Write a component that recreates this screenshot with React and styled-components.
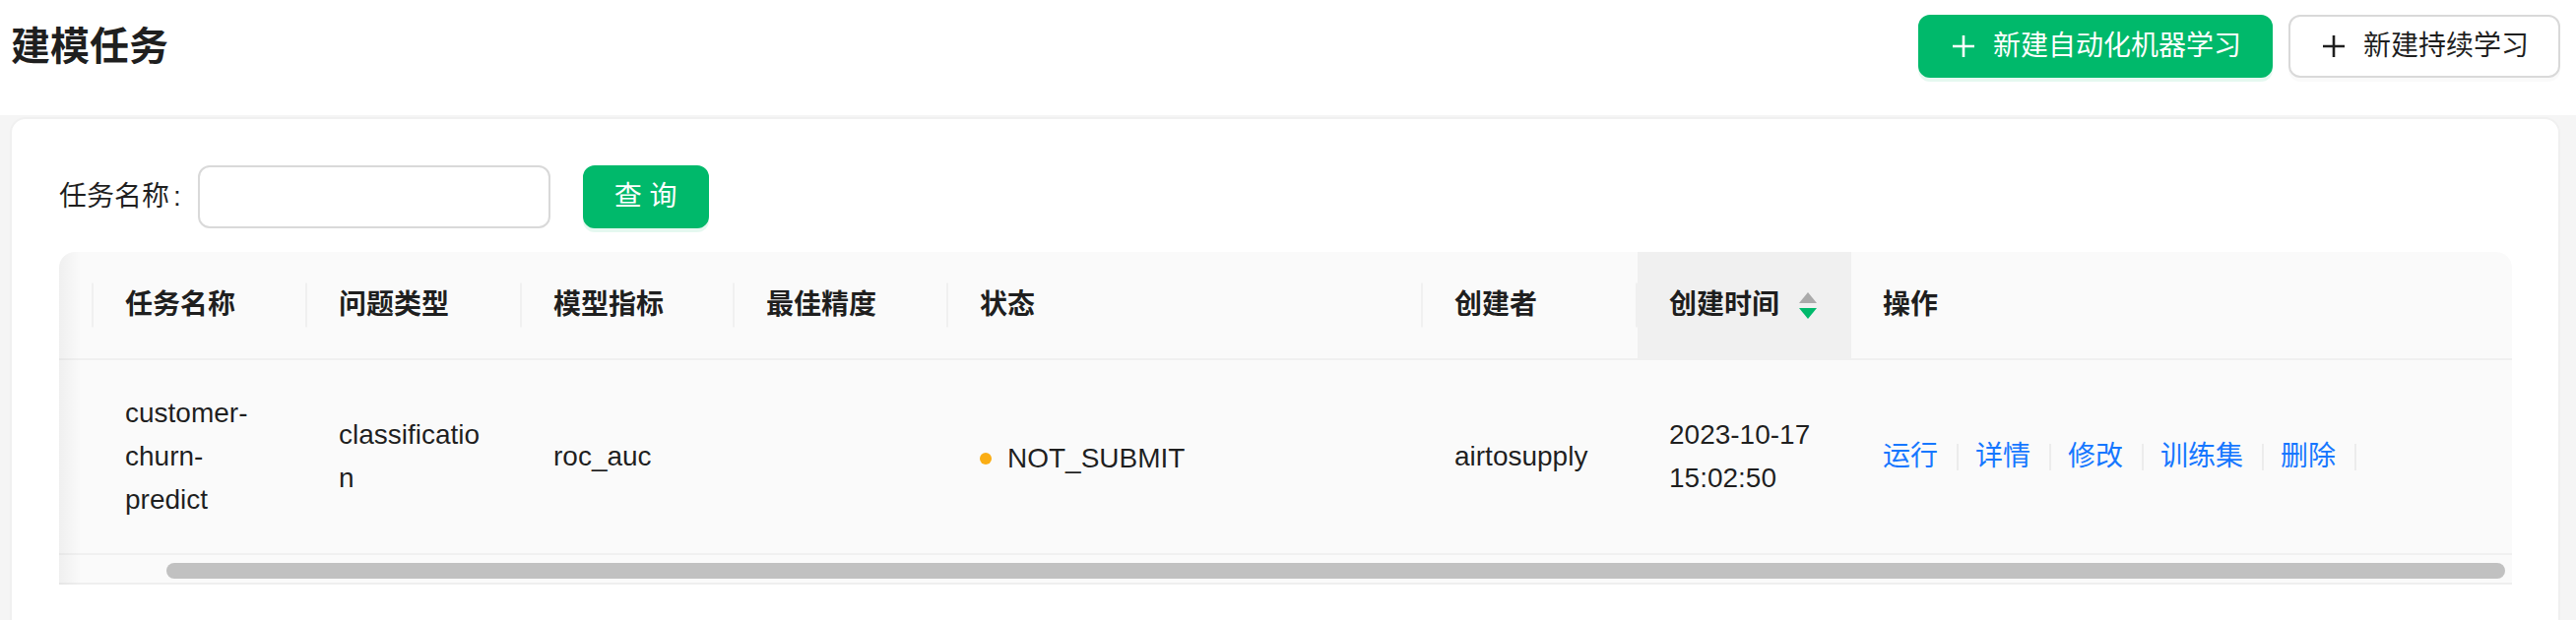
import React from "react";
import styled, { createGlobalStyle } from "styled-components";

const FONT = '"Liberation Sans", "Noto Sans CJK SC", sans-serif';
const TEXT = "rgba(0, 0, 0, 0.88)";
const GREEN = "#00b96b";

const GlobalStyle = createGlobalStyle`
  html, body {
    margin: 0;
    padding: 0;
    background: #ffffff;
    overflow: hidden;
  }
  body {
    font-family: ${FONT};
    color: ${TEXT};
  }
  * { box-sizing: border-box; }
`;

const Page = styled.div`
  width: 2616px;
  height: 630px;
  display: flex;
  flex-direction: column;
  overflow: hidden;
`;

const Header = styled.header`
  height: 117px;
  flex: none;
  display: flex;
  justify-content: space-between;
  align-items: flex-start;
  padding: 15px 16px 0 11px;
  background: #ffffff;
`;

const Title = styled.h1`
  margin: 0;
  font-size: 40px;
  line-height: 64px;
  font-weight: 700;
  color: ${TEXT};
`;

const Actions = styled.div`
  display: flex;
  gap: 16px;
`;

const Button = styled.button`
  height: 64px;
  display: inline-flex;
  align-items: center;
  gap: 16px;
  padding: 0 30px;
  border-radius: 12px;
  font-family: ${FONT};
  font-size: 28px;
  line-height: 44px;
  cursor: pointer;
  border: 2px solid ${(p) => (p.$primary ? GREEN : "#d9d9d9")};
  background: ${(p) => (p.$primary ? GREEN : "#ffffff")};
  color: ${(p) => (p.$primary ? "#ffffff" : TEXT)};
  box-shadow: ${(p) =>
    p.$primary ? "0 4px 0 rgba(0, 185, 107, 0.1)" : "0 4px 0 rgba(0, 0, 0, 0.02)"};
  margin-left: ${(p) => p.$gap || 0}px;
`;

const Content = styled.main`
  flex: 1;
  background: #f5f5f5;
  padding: 2px 16px 0 10px;
  min-height: 0;
`;

const Card = styled.section`
  background: #ffffff;
  border: 2px solid #f0f0f0;
  border-radius: 16px;
  padding: 47px 47px 48px 48px;
`;

const SearchRow = styled.div`
  display: flex;
  align-items: center;
  margin-bottom: 24px;
`;

const Label = styled.label`
  font-size: 28px;
  line-height: 44px;
  color: ${TEXT};
  display: flex;
  align-items: center;
`;

const Colon = styled.span`
  margin: 0 17px 0 4px;
`;

const Input = styled.input`
  width: 358px;
  height: 64px;
  border: 2px solid #d9d9d9;
  border-radius: 12px;
  background: #ffffff;
  font-family: ${FONT};
  font-size: 28px;
  padding: 0 22px;
  outline: none;
`;

const TableWrap = styled.div`
  position: relative;
  border-radius: 16px 16px 0 0;
  overflow: hidden;

  &::after {
    content: "";
    position: absolute;
    left: 0;
    top: 0;
    bottom: 0;
    width: 22px;
    background: linear-gradient(to right, rgba(0, 0, 0, 0.045), rgba(0, 0, 0, 0));
    pointer-events: none;
  }
`;

const Table = styled.table`
  width: 2491px;
  table-layout: fixed;
  border-collapse: separate;
  border-spacing: 0;
  font-size: 28px;
  line-height: 44px;
  color: ${TEXT};
`;

const Th = styled.th`
  position: relative;
  text-align: left;
  font-weight: 600;
  padding: 32px;
  background: ${(p) => (p.$sorted ? "#f0f0f0" : "#fafafa")};
  border-bottom: 2px solid #f0f0f0;
  white-space: nowrap;

  &::before {
    content: "";
    display: ${(p) => (p.$split ? "block" : "none")};
    position: absolute;
    right: 0;
    top: 50%;
    width: 2px;
    height: 45px;
    transform: translateY(-50%);
    background: #f0f0f0;
  }
`;

const SortHead = styled.div`
  display: flex;
  align-items: center;
  gap: 20px;
`;

const Td = styled.td`
  padding: 32px;
  background: #fafafa;
  border-bottom: 2px solid #f0f0f0;
  vertical-align: middle;
  overflow-wrap: break-word;
  word-wrap: break-word;
`;

const Status = styled.span`
  display: inline-flex;
  align-items: center;
`;

const Dot = styled.span`
  width: 12px;
  height: 12px;
  border-radius: 50%;
  background: ${(p) => p.$color};
  margin-right: 16px;
`;

const Ops = styled.div`
  display: flex;
  align-items: center;
`;

const OpLink = styled.a`
  color: #1677ff;
  text-decoration: none;
  white-space: nowrap;
  cursor: pointer;
`;

const OpSplit = styled.span`
  width: 2px;
  height: 27px;
  background: #ececec;
  margin: 0 17px 0 19px;
`;

const ScrollTrack = styled.div`
  height: 30px;
  background: #fafafa;
  border-bottom: 2px solid #efefef;
  padding-top: 8px;
`;

const ScrollThumb = styled.div`
  height: 16px;
  border-radius: 8px;
  background: #c1c1c1;
  margin-left: ${(p) => p.$offset}px;
  width: ${(p) => p.$size}px;
`;

const PlusIcon = () => (
  <svg width="28" height="28" viewBox="0 0 28 28" aria-hidden="true">
    <path d="M14 3v22M3 14h22" stroke="currentColor" strokeWidth="2.6" fill="none" />
  </svg>
);

const SortIcon = () => (
  <svg width="18" height="27" viewBox="0 0 18 27" aria-hidden="true">
    <polygon points="9,0 18,11 0,11" fill="#aaaaaa" />
    <polygon points="0,16 18,16 9,27" fill={GREEN} />
  </svg>
);

const columns = [
  { key: "pre", title: "", width: 35 },
  { key: "name", title: "任务名称", width: 217 },
  { key: "type", title: "问题类型", width: 218 },
  { key: "metric", title: "模型指标", width: 216 },
  { key: "best", title: "最佳精度", width: 217 },
  { key: "status", title: "状态", width: 482 },
  { key: "creator", title: "创建者", width: 218 },
  { key: "created", title: "创建时间", width: 217, sorted: true },
  { key: "ops", title: "操作", width: 671 },
];

const rows = [
  {
    id: 1,
    name: "customer-churn-predict",
    type: "classification",
    metric: "roc_auc",
    best: "",
    status: "NOT_SUBMIT",
    creator: "airtosupply",
    created: "2023-10-17 15:02:50",
  },
];

const ops = ["运行", "详情", "修改", "训练集", "删除"];

export default function App() {
  return (
    <>
      <GlobalStyle />
      <Page>
        <Header>
          <Title>建模任务</Title>
          <Actions>
            <Button $primary>
              <PlusIcon />
              新建自动化机器学习
            </Button>
            <Button>
              <PlusIcon />
              新建持续学习
            </Button>
          </Actions>
        </Header>
        <Content>
          <Card>
            <SearchRow>
              <Label>
                任务名称<Colon>:</Colon>
              </Label>
              <Input type="text" />
              <Button $primary $gap={33}>
                查 询
              </Button>
            </SearchRow>
            <TableWrap>
              <Table>
                <colgroup>
                  {columns.map((c) => (
                    <col key={c.key} style={{ width: c.width }} />
                  ))}
                </colgroup>
                <thead>
                  <tr>
                    {columns.map((c, i) => (
                      <Th
                        key={c.key}
                        $sorted={c.sorted}
                        $split={i < columns.length - 1 && !c.sorted}
                      >
                        {c.sorted ? (
                          <SortHead>
                            {c.title}
                            <SortIcon />
                          </SortHead>
                        ) : (
                          c.title
                        )}
                      </Th>
                    ))}
                  </tr>
                </thead>
                <tbody>
                  {rows.map((r) => (
                    <tr key={r.id}>
                      <Td />
                      <Td>{r.name}</Td>
                      <Td>{r.type}</Td>
                      <Td>{r.metric}</Td>
                      <Td>{r.best}</Td>
                      <Td>
                        <Status>
                          <Dot $color="#faad14" />
                          {r.status}
                        </Status>
                      </Td>
                      <Td>{r.creator}</Td>
                      <Td>{r.created}</Td>
                      <Td>
                        <Ops>
                          {ops.map((o) => (
                            <React.Fragment key={o}>
                              <OpLink>{o}</OpLink>
                              <OpSplit />
                            </React.Fragment>
                          ))}
                        </Ops>
                      </Td>
                    </tr>
                  ))}
                </tbody>
              </Table>
              <ScrollTrack>
                <ScrollThumb $offset={109} $size={2375} />
              </ScrollTrack>
            </TableWrap>
          </Card>
        </Content>
      </Page>
    </>
  );
}
